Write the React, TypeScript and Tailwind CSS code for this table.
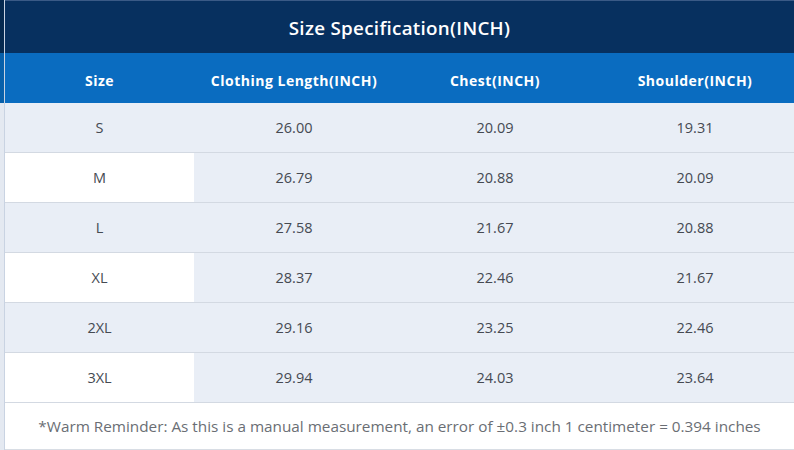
const rows = [
  { size: 'S', length: '26.00', chest: '20.09', shoulder: '19.31', white: false },
  { size: 'M', length: '26.79', chest: '20.88', shoulder: '20.09', white: true },
  { size: 'L', length: '27.58', chest: '21.67', shoulder: '20.88', white: false },
  { size: 'XL', length: '28.37', chest: '22.46', shoulder: '21.67', white: true },
  { size: '2XL', length: '29.16', chest: '23.25', shoulder: '22.46', white: false },
  { size: '3XL', length: '29.94', chest: '24.03', shoulder: '23.64', white: true },
];

const cols = 'grid grid-cols-[189px_200px_202px_1fr]';

export default function App() {
  return (
    <div className="flex h-[450px] w-[794px] bg-white font-['Open_Sans',sans-serif]">
      <div className="flex w-[4px] flex-col">
        <div className="h-[53px] bg-[#05294f]" />
        <div className="h-[50px] bg-[#0860aa]" />
        <div className="flex-1 bg-[#e4e9f1]" />
      </div>
      <div className="flex flex-1 flex-col border-l border-[#c9d3e2]">
        <div className="flex h-[53px] items-center justify-center border-t border-[#3a5a86] pt-[2px] text-[18.8px] font-semibold tracking-[0.3px] text-white bg-[#07305f]">
          Size Specification(INCH)
        </div>
        <div className={`${cols} h-[50px] items-center bg-[#0a6cc0] pt-[5px] text-[14px] font-bold tracking-[0.5px] text-white`}>
          <div className="text-center">Size</div>
          <div className="text-center">Clothing Length(INCH)</div>
          <div className="text-center">Chest(INCH)</div>
          <div className="text-center">Shoulder(INCH)</div>
        </div>
        {rows.map((r) => (
          <div
            key={r.size}
            className={`${cols} h-[50px] border-b border-[#d3d9e2] bg-[#e9eef6] text-[14.5px] text-[#454a52]`}
          >
            <div className={`flex items-center justify-center ${r.white ? 'bg-white' : ''}`}>{r.size}</div>
            <div className="flex items-center justify-center">{r.length}</div>
            <div className="flex items-center justify-center">{r.chest}</div>
            <div className="flex items-center justify-center">{r.shoulder}</div>
          </div>
        ))}
        <div className="flex flex-1 items-center justify-center border-b border-[#d8dde4] text-[15.3px] text-[#6a6e74]">
          *Warm Reminder: As this is a manual measurement, an error of ±0.3 inch 1 centimeter = 0.394 inches
        </div>
      </div>
    </div>
  );
}
